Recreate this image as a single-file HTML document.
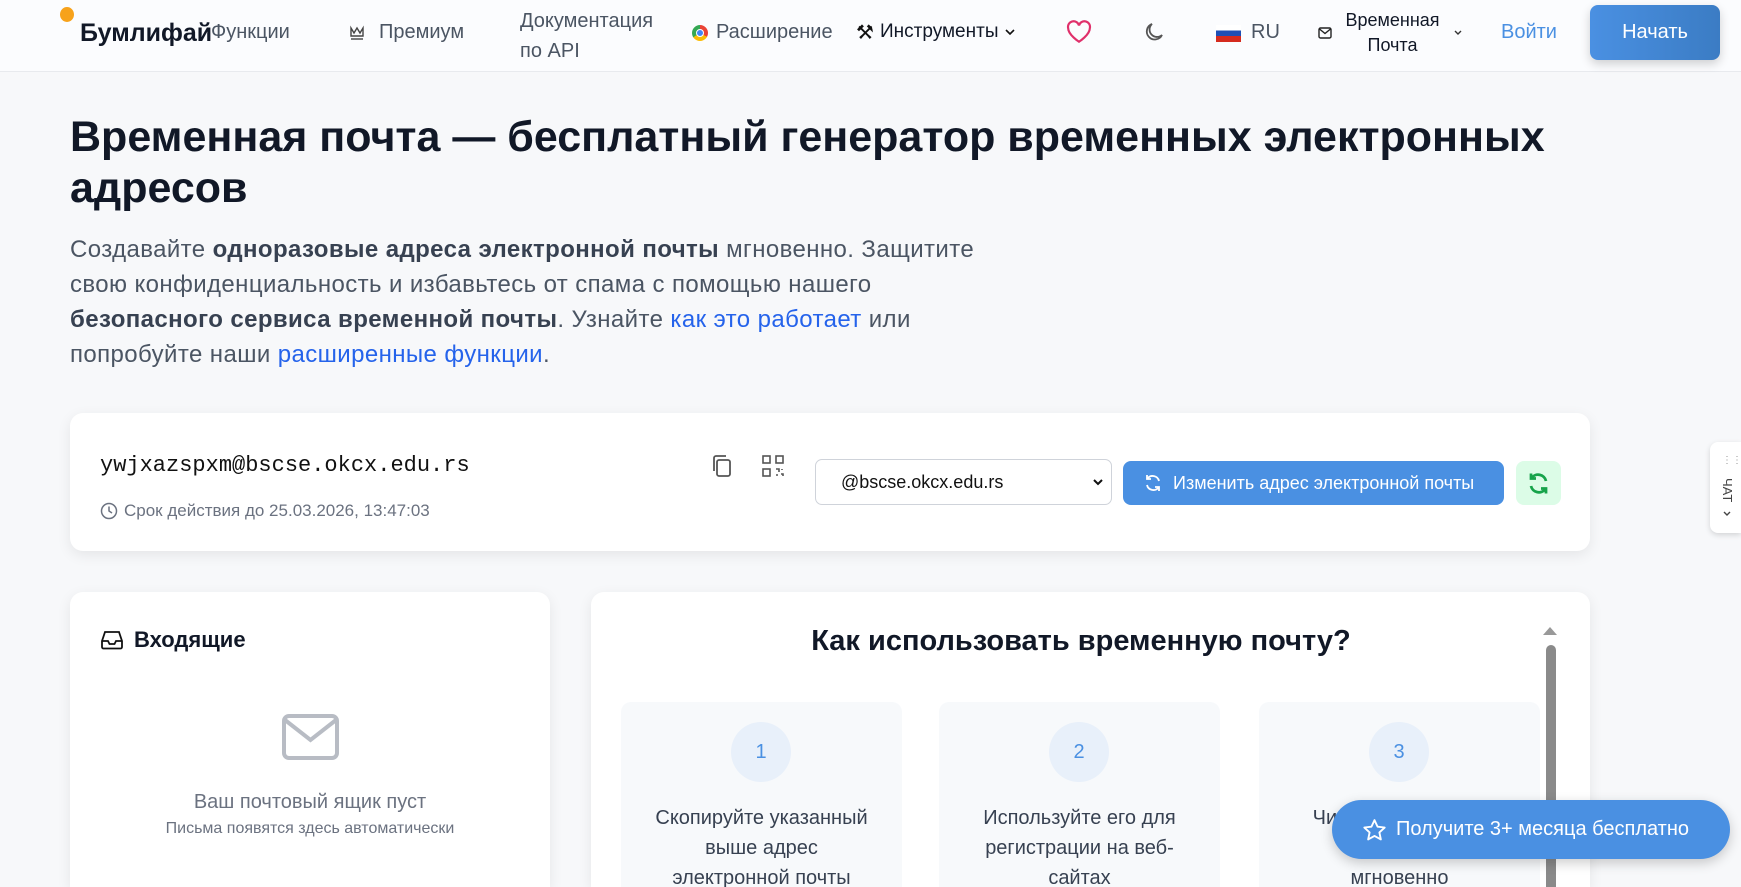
<!DOCTYPE html>
<html style="overflow:hidden;height:887px"><head><meta charset="utf-8">
<style>
*{box-sizing:border-box;margin:0;padding:0}
body{width:1741px;height:887px;overflow:hidden;background:#f7f8fa;font-family:"Liberation Sans","Noto Sans CJK SC",sans-serif;color:#111827;position:relative}
.abs{position:absolute}
nav{position:absolute;left:0;top:0;width:1741px;height:72px;background:#fbfcfe;border-bottom:1px solid #e8eaee}
.nt{position:absolute;font-size:20px;color:#4b5563;white-space:nowrap}
h1{position:absolute;left:70px;top:112px;font-size:43px;line-height:51px;font-weight:700;color:#111827;width:1560px}
.lead{position:absolute;left:70px;top:232px;width:1100px;font-size:24px;line-height:35px;color:#4b5563;white-space:nowrap;letter-spacing:0.4px}
.lead b{color:#374151}
.lead a{color:#2563eb;text-decoration:none}
.card{position:absolute;background:#fff;border-radius:13px 13px 0 0;box-shadow:0 4px 14px rgba(0,0,0,.08)}
.step{position:absolute;top:702px;width:281px;height:185px;background:#f7f9fb;border-radius:10px 10px 0 0}
.circ{position:absolute;left:110px;top:20px;width:60px;height:60px;border-radius:50%;background:#e8f0fa;color:#4a90e2;font-size:20px;text-align:center;line-height:60px}
.st{position:absolute;left:0;top:101px;width:100%;text-align:center;font-size:20px;line-height:30px;color:#374151}
</style></head><body>
<nav>
 <div class="abs" style="left:60px;top:7px;width:14px;height:15px;border-radius:50%;background:#f7a21b"></div>
 <div class="abs" style="left:80px;top:19px;font-size:25px;font-weight:700;color:#111827">Бумлифай</div>
 <div class="nt" style="left:211px;top:21px">Функции</div>
 <svg class="abs" style="left:349px;top:25px" width="16" height="16" viewBox="0 0 16 16" fill="none" stroke="#444" stroke-width="1.4"><path d="M2 3l3 5 3-5 3 5 3-5v8H2z"/><path d="M2 14h12"/></svg>
 <div class="nt" style="left:379px;top:21px">Премиум</div>
 <div class="nt" style="left:520px;top:6px;line-height:30px">Документация<br>по API</div>
 <div class="abs" style="left:692px;top:25px;width:16px;height:16px;border-radius:50%;background:conic-gradient(#ea4335 0 33%,#fbbc05 0 66%,#34a853 0);"></div>
 <div class="abs" style="left:696px;top:29px;width:8px;height:8px;border-radius:50%;background:#4285f4;border:1px solid #fff"></div>
 <div class="nt" style="left:716px;top:21px">Расширение</div>
 <div class="nt" style="left:856px;top:20px;color:#111">⚒</div>
 <div class="nt" style="left:880px;top:21px;color:#111827;font-size:19px">Инструменты</div>
 <svg class="abs" style="left:1004px;top:27px" width="12" height="10" viewBox="0 0 12 10"><path d="M2 3l4 4 4-4" fill="none" stroke="#111" stroke-width="1.6"/></svg>
 <svg class="abs" style="left:1066px;top:20px" width="26" height="24" viewBox="0 0 24 22"><path d="M12 20S2 13.5 2 7.5A5 5 0 0 1 12 5a5 5 0 0 1 10 2.5C22 13.5 12 20 12 20z" fill="none" stroke="#e0306b" stroke-width="2"/></svg>
 <svg class="abs" style="left:1142px;top:20px" width="24" height="24" viewBox="0 0 24 24"><path d="M20 15A8 8 0 1 1 10 4a6.5 6.5 0 0 0 10 11z" fill="none" stroke="#555" stroke-width="1.8"/></svg>
 <div class="abs" style="left:1216px;top:25px;width:25px;height:17px;background:linear-gradient(#fff 0 33%,#1e4fb5 33% 66%,#d52b1e 66%)"></div>
 <div class="nt" style="left:1251px;top:21px">RU</div>
 <svg class="abs" style="left:1318px;top:27px" width="14" height="12" viewBox="0 0 14 12"><rect x="1" y="1" width="12" height="10" rx="1.5" fill="none" stroke="#222" stroke-width="1.4"/><path d="M1.5 2l5.5 4.5L12.5 2" fill="none" stroke="#222" stroke-width="1.4"/></svg>
 <div class="nt" style="left:1340px;top:8px;line-height:25px;font-size:18px;text-align:center;color:#111827;width:105px">Временная<br>Почта</div>
 <svg class="abs" style="left:1453px;top:29px" width="10" height="8" viewBox="0 0 10 8"><path d="M2 2l3 3 3-3" fill="none" stroke="#333" stroke-width="1.4"/></svg>
 <div class="nt" style="left:1501px;top:21px;color:#4a90e2">Войти</div>
 <div class="abs" style="left:1590px;top:5px;width:130px;height:55px;border-radius:8px;background:linear-gradient(90deg,#4a90e2,#3b7cc4);box-shadow:0 4px 10px rgba(0,0,0,.18);color:#fff;font-size:20px;text-align:center;line-height:55px">Начать</div>
</nav>

<h1>Временная почта — бесплатный генератор временных электронных адресов</h1>
<div class="lead">Создавайте <b>одноразовые адреса электронной почты</b> мгновенно. Защитите<br>свою конфиденциальность и избавьтесь от спама с помощью нашего<br><b>безопасного сервиса временной почты</b>. Узнайте <a>как это работает</a> или<br>попробуйте наши <a>расширенные функции</a>.</div>

<div class="card" style="left:70px;top:413px;width:1520px;height:138px;border-radius:13px">
 <div class="abs" style="left:30px;top:40px;font-family:'Liberation Mono',monospace;font-size:22px;color:#111">ywjxazspxm@bscse.okcx.edu.rs</div>
 <svg class="abs" style="left:30px;top:89px" width="18" height="18" viewBox="0 0 18 18"><circle cx="9" cy="9" r="7.5" fill="none" stroke="#6b7280" stroke-width="1.5"/><path d="M9 4.5V9l3 2" fill="none" stroke="#6b7280" stroke-width="1.5"/></svg>
 <div class="abs" style="left:54px;top:88px;font-size:17px;color:#6b7280">Срок действия до 25.03.2026, 13:47:03</div>
 <svg class="abs" style="left:640px;top:40px" width="24" height="26" viewBox="0 0 24 26"><rect x="7" y="7" width="13" height="16" rx="2" fill="none" stroke="#555" stroke-width="1.8"/><path d="M4 18V5a2 2 0 0 1 2-2h10" fill="none" stroke="#555" stroke-width="1.8"/></svg>
 <svg class="abs" style="left:692px;top:42px" width="22" height="22" viewBox="0 0 22 22" fill="none" stroke="#555" stroke-width="1.6"><rect x="1" y="1" width="7" height="7"/><rect x="14" y="1" width="7" height="7"/><rect x="1" y="14" width="7" height="7"/><path d="M14 14h3v3M20 14v1M14 20h2M19 19h2v2"/></svg>
 <div class="abs" style="left:745px;top:46px;width:297px;height:46px;border:1px solid #cfd3da;border-radius:7px;font-size:18px;line-height:44px;padding-left:25px;color:#111">@bscse.okcx.edu.rs</div>
 <svg class="abs" style="left:1022px;top:65px" width="12" height="9" viewBox="0 0 12 9"><path d="M2 2l4 4 4-4" fill="none" stroke="#111" stroke-width="2"/></svg>
 <div class="abs" style="left:1053px;top:48px;width:381px;height:44px;border-radius:8px;background:#4a90e2;color:#fff;font-size:18px;line-height:44px;padding-left:50px">Изменить адрес электронной почты</div>
 <svg class="abs" style="left:1073px;top:60px" width="20" height="20" viewBox="0 0 20 20" fill="none" stroke="#fff" stroke-width="1.8"><path d="M16 8a6.5 6.5 0 0 0-11.5-2.5M4 12a6.5 6.5 0 0 0 11.5 2.5"/><path d="M4 2v4h4M16 18v-4h-4"/></svg>
 <div class="abs" style="left:1446px;top:48px;width:45px;height:44px;border-radius:8px;background:#dcfce7"></div>
 <svg class="abs" style="left:1456px;top:58px" width="25" height="25" viewBox="0 0 20 20" fill="none" stroke="#16a34a" stroke-width="2.2"><path d="M16 8a6.5 6.5 0 0 0-11.5-2.5M4 12a6.5 6.5 0 0 0 11.5 2.5"/><path d="M4 2v4h4M16 18v-4h-4"/></svg>
</div>

<div class="card" style="left:70px;top:592px;width:480px;height:295px">
 <svg class="abs" style="left:31px;top:38px" width="22" height="20" viewBox="0 0 22 20" fill="none" stroke="#111" stroke-width="1.8"><path d="M4 2h14l3 9v6a1.5 1.5 0 0 1-1.5 1.5h-17A1.5 1.5 0 0 1 1 17v-6z"/><path d="M1 11h6l1.5 3h5l1.5-3h6"/></svg>
 <div class="abs" style="left:64px;top:35px;font-size:22px;font-weight:700">Входящие</div>
 <svg class="abs" style="left:212px;top:122px" width="57" height="46" viewBox="0 0 57 46" fill="none" stroke="#b8bcc4" stroke-width="4"><rect x="2" y="2" width="53" height="42" rx="5"/><path d="M3 6l25.5 20L54 6"/></svg>
 <div class="abs" style="left:0;top:199px;width:480px;text-align:center;font-size:20px;color:#6b7280">Ваш почтовый ящик пуст</div>
 <div class="abs" style="left:0;top:228px;width:480px;text-align:center;font-size:16px;color:#6b7280">Письма появятся здесь автоматически</div>
</div>

<div class="card" style="left:591px;top:592px;width:999px;height:295px">
 <div class="abs" style="left:0;top:33px;width:980px;text-align:center;font-size:29px;font-weight:700;color:#111827">Как использовать временную почту?</div>
</div>
<div class="step" style="left:621px"><div class="circ">1</div><div class="st">Скопируйте указанный<br>выше адрес<br>электронной почты</div></div>
<div class="step" style="left:939px"><div class="circ">2</div><div class="st">Используйте его для<br>регистрации на веб-<br>сайтах</div></div>
<div class="step" style="left:1259px"><div class="circ">3</div><div class="st">Читайте входящие<br>письма<br>мгновенно</div></div>
<div class="abs" style="left:1543px;top:627px;width:0;height:0;border-left:7px solid transparent;border-right:7px solid transparent;border-bottom:8px solid #999"></div>
<div class="abs" style="left:1546px;top:645px;width:10px;height:242px;border-radius:5px 5px 0 0;background:#8a8a8a"></div>

<div class="abs" style="left:1710px;top:442px;width:31px;height:91px;background:#fff;border-radius:8px 0 0 8px;box-shadow:0 2px 6px rgba(0,0,0,.15)"></div>
<div class="abs" style="left:1722px;top:458px;font-size:10px;color:#999;line-height:5px">⋮⋮</div>
<div class="abs" style="left:1735px;top:478px;font-size:13px;color:#444;transform:rotate(90deg);transform-origin:left top">ЧАТ</div>
<svg class="abs" style="left:1722px;top:510px" width="10" height="8" viewBox="0 0 10 8"><path d="M2 2l3 3 3-3" fill="none" stroke="#444" stroke-width="1.4"/></svg>

<div class="abs" style="left:1332px;top:800px;width:398px;height:59px;border-radius:30px;background:#4a90e2;box-shadow:0 4px 12px rgba(0,0,0,.2)"></div>
<svg class="abs" style="left:1362px;top:818px" width="25" height="24" viewBox="0 0 24 23"><path d="M12 2l2.9 6.3 6.9.8-5.1 4.7 1.4 6.8L12 17.2l-6.1 3.4 1.4-6.8L2.2 9.1l6.9-.8z" fill="none" stroke="#fff" stroke-width="1.8" stroke-linejoin="round"/></svg>
<div class="abs" style="left:1396px;top:818px;font-size:20px;color:#fff">Получите 3+ месяца бесплатно</div>
</body></html>
